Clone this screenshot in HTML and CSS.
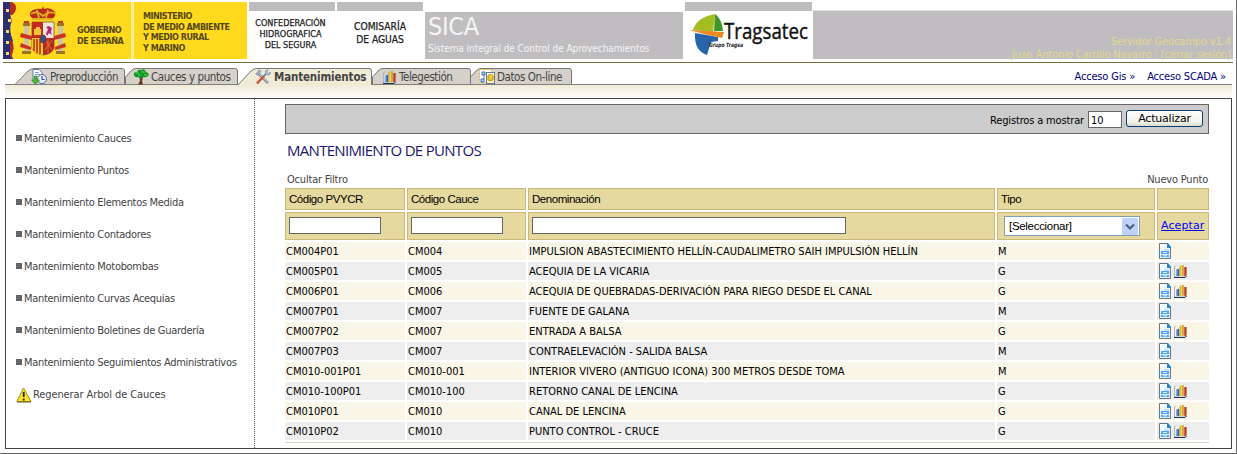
FILE: index.html
```html
<!DOCTYPE html>
<html lang="es">
<head>
<meta charset="utf-8">
<title>SICA - Mantenimiento de puntos</title>
<link rel="stylesheet" href="styles.css">
</head>
<body>
<svg class="defs" width="0" height="0" aria-hidden="true">
  <defs>
    <linearGradient id="page" x2="1" y2="1"><stop offset="0" stop-color="#fff"/><stop offset="1" stop-color="#d5ebfc"/></linearGradient>
    <linearGradient id="gold"><stop offset="0" stop-color="#a98512"/><stop offset=".45" stop-color="#ffe24a"/><stop offset="1" stop-color="#a87b0d"/></linearGradient>
    <linearGradient id="red"><stop offset="0" stop-color="#f28a55"/><stop offset="1" stop-color="#941b08"/></linearGradient>
    <linearGradient id="blue"><stop offset="0" stop-color="#8fc0fa"/><stop offset="1" stop-color="#1c46a8"/></linearGradient>
    <symbol id="doc" viewBox="0 0 13 16">
      <path d="M.5.5H8.500L11.500 4V15.500H.5Z" fill="url(#page)" stroke="#72767f"/>
      <path d="M8 0V5H12V4L9 0Z" fill="#2787cb"/>
      <path d="M5 6H10V8H5Z" fill="#c5e0fa"/>
      <path d="M2 8H10V11H2ZM2 12H10V14H2Z" fill="#4fa4f2"/>
      <path d="M4 9.500H8M4 12.800H8" stroke="#d8efff"/>
    </symbol>
    <symbol id="chart" viewBox="0 0 15 16">
      <path d="M1.500 4.500V14H13.500" fill="none" stroke="#a4b4cc"/>
      <path d="M1 14.500H12L13.500 13" fill="none" stroke="#24364f"/>
      <path d="M1 5 3 2.500" stroke="#9db0c8"/>
      <path d="M3 7 4 6H6V13H3Z" fill="url(#blue)"/>
      <path d="M6.500 4 8 2H10.500V12L9.500 13H6.500Z" fill="url(#gold)"/>
      <path d="M10.500 5 11.500 4H13.500V12.500L12.500 13H10.500Z" fill="url(#red)"/>
    </symbol>
  </defs>
</svg>
<div class="window">
  <header class="banner">
    <div class="gov">
      <svg class="flag" width="63" height="57" viewBox="0 0 63 57">
        <rect width="7" height="57" fill="#2d2f74"/>
        <path d="M7 0h7v57H7z" fill="#353875"/>
        <path d="M7 0Q16 3 14 9H7ZM8 14Q13 18 13 22H8Z" fill="#d2331f"/>
        <path d="M9 0h5v57h-4q-4-9 0-18q-5-13-1-20q-4-9 0-19z" fill="#ffd91b"/>
        <path d="M7 0Q14 1 13 7Q11 14 7 13ZM7 38q5 2 3 12l-3 7z" fill="#b52c24"/>
        <g fill="#f1dc76"><path d="M3 7h3v3H3zM5 17h3v3H5zM3 28h3v3H3zM3 39h3v3H3zM3 50h3v3H3z"/></g>
        <path d="M29 16Q24 11 30 8Q36 6 39 7L40 4L41 7Q47 5 51 9Q55 12 49 17Z" fill="#b92a19"/>
        <path d="M28 12Q34 8 40 14Q47 8 53 12M29 17H50M34 8L36 16M45 8L43 16" fill="none" stroke="#e0ad25" stroke-width="1.800"/>
        <rect x="21" y="23" width="5" height="28" fill="#c9c2ae"/><rect x="55" y="23" width="5" height="28" fill="#c9c2ae"/>
        <path d="M20 21h7v3h-7zM54 21h7v3h-7zM19 49h9v3h-9zM53 49h9v3h-9z" fill="#9b7522"/>
        <path d="M21 19h5v2h-5zM55 19h5v2h-5z" fill="#c8311e"/>
        <path d="M18 31L29 34V38L17 35ZM62 31L51 34V38L63 35ZM18 41L28 45V48L17 45ZM62 41L52 45V48L63 45Z" fill="#c93324"/>
        <path d="M29 20H51V46Q49 52 40 53Q31 52 29 46Z" fill="#efe6dd" stroke="#8b552b" stroke-width=".8"/>
        <path d="M29 20H40V36H29Z" fill="#c52b20"/><path d="M31 27h2v-2h4v2h1v6h-7z" fill="#f1c736"/>
        <path d="M43 32l2-5-2-2 3-1 3 2-1 4 1 3-3-2-2 3z" fill="#b42881"/>
        <path d="M29 36H40V53Q31 52 29 46Z" fill="#f3c82b"/><path d="M31 37v12M34 37v14M37 37v15" stroke="#be2b1c" stroke-width="1.500"/>
        <path d="M40 36H51V46Q49 52 40 53Z" fill="#b62923"/><path d="M42 38l7 10m0-10l-7 10m3-11v14" stroke="#d88b28" stroke-width=".8"/>
        <ellipse cx="40" cy="37" rx="3" ry="4" fill="#24569b" stroke="#a32321"/>
      </svg>
      <p class="gov-name">GOBIERNO<br>DE ESPAÑA</p>
    </div>
    <p class="ministry">MINISTERIO<br>DE MEDIO AMBIENTE<br>Y MEDIO RURAL<br>Y MARINO</p>
    <p class="org org-a">CONFEDERACIÓN<br>HIDROGRAFICA<br>DEL SEGURA</p>
    <p class="org org-b">COMISARÍA<br>DE AGUAS</p>
    <div class="sica"><strong>SICA</strong><span>Sistema integral de Control de Aprovechamientos</span></div>
    <svg class="tragsatec" width="129" height="57" viewBox="0 0 129 57">
      <rect width="129" height="57" fill="#fff"/><rect x="1" width="127" height="9" fill="#bfbdc0"/>
      <path d="M9 28Q13 15 31 12L29 30Z" fill="#a6bd22"/>
      <path d="M31 12Q38 17 39 29L30 29Z" fill="#3f962b"/>
      <path d="M11 31L34 35L34 39L27 40L23 53Q10 49 11 31Z" fill="#2764aa"/>
      <path d="M5 28L40 30L38 36L20 32Z" fill="#ed8922"/>
      <text x="40" y="36.500" class="brand" textLength="84" lengthAdjust="spacingAndGlyphs">Tragsatec</text>
      <text x="25" y="45" class="group" textLength="34" lengthAdjust="spacingAndGlyphs">Grupo Tragsa</text>
    </svg>
    <div class="session"><span class="server">Servidor Geocampo v1.4</span><span class="user">Juan Antonio Carrillo Navarro : [cerrar sesión]</span></div>
  </header>

  <nav class="tabs">
    <a class="tab t1"><svg class="shape" width="110" height="17"><path d="M0 16.500L13 3Q16 .5 19 .5H107Q109.500 .5 109.500 3V16.500" /></svg>
      <svg class="ico" width="16" height="16" viewBox="0 0 16 16"><path d="M2 .5H8L11 3.500V12H2Z" fill="#fff" stroke="#6479b0"/><path d="M4 3.500h4M4 5.500h5" stroke="#7fa0d4"/><circle cx="11" cy="10" r="4.500" fill="#e6edff" stroke="#5264b0"/><path d="M11 7V10.500H13.500" fill="none" stroke="#2a397d"/><path d="M3 7H6V11H8.500L4.500 15.500 .5 11H3Z" fill="#4aba37" stroke="#268c20" stroke-width=".6"/></svg><span>Preproducción</span></a>
    <a class="tab t2"><svg class="shape" width="113" height="17"><path d="M.5 16.500V9L6 3Q8 .5 11 .5H110Q112.500 .5 112.500 3V16.500"/></svg>
      <svg class="ico" width="16" height="16" viewBox="0 0 16 16"><path d="M6.500 8L7 12 5 15.500H10L9 12 10 8Z" fill="#6a3513"/><path d="M1 6Q0 3 4 3Q5 0 8 1Q12-1 13 3Q17 4 15 7Q12 9 10 8L8 10 5 8Q2 9 1 6Z" fill="#18922a"/><path d="M3 4h3M8 3h4M5 6h3M11 6h3" stroke="#36ca40" stroke-width="1.500"/></svg><span>Cauces y puntos</span></a>
    <a class="tab t3 active"><svg class="shape" width="134" height="17"><path d="M0 17L13 3Q16 .5 19 .5H131Q133.500 .5 133.500 3V17"/></svg>
      <svg class="ico" width="16" height="16" viewBox="0 0 16 16"><path d="M3 4L13 14" stroke="#71839b" stroke-width="2.500"/><path d="M3 3.500L13 13.500" stroke="#edf3fb"/><path d="M.8 5L4.500.8L6 2.500L3 6Z" fill="#a9b6cb" stroke="#6d7890" stroke-width=".7"/><path d="M2 14.500L9 7" stroke="#d84c31" stroke-width="2.500"/><path d="M8.500 7.500L12 4" stroke="#7a8eae" stroke-width="2"/><path d="M10.500 4V1.800L13 .8 12 3 13.500 4.500 15.300 3 15 5.500 12 6Z" fill="#becce0" stroke="#7284a0" stroke-width=".7"/></svg><span>Mantenimientos</span></a>
    <a class="tab t4"><svg class="shape" width="99" height="17"><path d="M.5 16.500V9L6 3Q8 .5 11 .5H96Q98.500 .5 98.500 3V16.500"/></svg>
      <svg class="ico" width="15" height="16"><use href="#chart"/></svg><span>Telegestión</span></a>
    <a class="tab t5"><svg class="shape" width="102" height="17"><path d="M.5 16.500V9L6 3Q8 .5 11 .5H99Q101.500 .5 101.500 3V16.500"/></svg>
      <svg class="ico" width="16" height="16" viewBox="0 0 16 16"><rect x=".5" y=".5" width="12" height="13" fill="#fff" stroke="#d6bb34" stroke-dasharray="2 1"/><path d="M3 3H6V6H3ZM2 10H5V13H2ZM5 5V10" fill="#bad6ff" stroke="#3d72bc"/><rect x="7.500" y="3.500" width="8" height="11" fill="#fff8ce" stroke="#667a93"/><ellipse cx="11.500" cy="7" rx="2.500" ry="1.500" fill="#ffe350" stroke="#be9710"/><path d="M9 7V11Q11.500 13 14 11V7" fill="#eec52b" stroke="#be9710"/></svg><span>Datos On-line</span></a>
    <div class="access"><a class="gis">Acceso Gis »</a><a class="scada">Acceso SCADA »</a></div>
  </nav>
  <div class="fade"></div>

  <main class="panel">
    <ul class="side">
      <li><i></i><span>Mantenimiento Cauces</span></li>
      <li><i></i><span>Mantenimiento Puntos</span></li>
      <li><i></i><span>Mantenimiento Elementos Medida</span></li>
      <li><i></i><span>Mantenimiento Contadores</span></li>
      <li><i></i><span>Mantenimiento Motobombas</span></li>
      <li><i></i><span>Mantenimiento Curvas Acequias</span></li>
      <li><i></i><span>Mantenimiento Boletines de Guardería</span></li>
      <li><i></i><span>Mantenimiento Seguimientos Administrativos</span></li>
      <li><svg class="warn" width="16" height="16" viewBox="0 0 16 16"><path d="M7.500 1 15 14.500H.8Z" fill="#ffe51b" stroke="#a58e13" stroke-linejoin="round"/><path d="M1 15H15" stroke="#66602c"/><path d="M7.700 5V10M7.700 11.500V13.500" stroke="#211d08" stroke-width="1.800"/></svg><span>Regenerar Arbol de Cauces</span></li>
    </ul>
    <section class="content">
      <div class="toolbar"><span class="show">Registros a mostrar</span><input class="count" value="10"><button>Actualizar</button></div>
      <h1>MANTENIMIENTO DE PUNTOS</h1>
      <div class="links"><a>Ocultar Filtro</a><a>Nuevo Punto</a></div>
      <table>
        <colgroup><col class="c1"><col class="c2"><col class="c3"><col class="c4"><col class="c5"></colgroup>
        <tr class="head"><th>Código PVYCR</th><th>Código Cauce</th><th>Denominación</th><th>Tipo</th><th></th></tr>
        <tr class="filter"><td><input class="f1"></td><td><input class="f1"></td><td><input class="f3"></td>
          <td><div class="select"><span>[Seleccionar]</span><svg width="16" height="17" viewBox="0 0 16 17"><rect width="16" height="17" rx="1.500" fill="#bfd2fb"/><path d="M4 6.500L8 10.500 12 6.500" fill="none" stroke="#4d6185" stroke-width="2.200"/></svg></div></td>
          <td class="ok"><a>Aceptar</a></td></tr>
        <tr><td>CM004P01</td><td>CM004</td><td>IMPULSION ABASTECIMIENTO HELLÍN-CAUDALIMETRO SAIH IMPULSIÓN HELLÍN</td><td>M</td><td><svg class="doc"><use href="#doc"/></svg></td></tr>
        <tr><td>CM005P01</td><td>CM005</td><td>ACEQUIA DE LA VICARIA</td><td>G</td><td><svg class="doc"><use href="#doc"/></svg><svg class="chart"><use href="#chart"/></svg></td></tr>
        <tr><td>CM006P01</td><td>CM006</td><td>ACEQUIA DE QUEBRADAS-DERIVACIÓN PARA RIEGO DESDE EL CANAL</td><td>G</td><td><svg class="doc"><use href="#doc"/></svg><svg class="chart"><use href="#chart"/></svg></td></tr>
        <tr><td>CM007P01</td><td>CM007</td><td>FUENTE DE GALANA</td><td>M</td><td><svg class="doc"><use href="#doc"/></svg></td></tr>
        <tr><td>CM007P02</td><td>CM007</td><td>ENTRADA A BALSA</td><td>G</td><td><svg class="doc"><use href="#doc"/></svg><svg class="chart"><use href="#chart"/></svg></td></tr>
        <tr><td>CM007P03</td><td>CM007</td><td>CONTRAELEVACIÓN - SALIDA BALSA</td><td>M</td><td><svg class="doc"><use href="#doc"/></svg></td></tr>
        <tr><td>CM010-001P01</td><td>CM010-001</td><td>INTERIOR VIVERO (ANTIGUO ICONA) 300 METROS DESDE TOMA</td><td>M</td><td><svg class="doc"><use href="#doc"/></svg></td></tr>
        <tr><td>CM010-100P01</td><td>CM010-100</td><td>RETORNO CANAL DE LENCINA</td><td>G</td><td><svg class="doc"><use href="#doc"/></svg><svg class="chart"><use href="#chart"/></svg></td></tr>
        <tr><td>CM010P01</td><td>CM010</td><td>CANAL DE LENCINA</td><td>G</td><td><svg class="doc"><use href="#doc"/></svg><svg class="chart"><use href="#chart"/></svg></td></tr>
        <tr><td>CM010P02</td><td>CM010</td><td>PUNTO CONTROL - CRUCE</td><td>G</td><td><svg class="doc"><use href="#doc"/></svg><svg class="chart"><use href="#chart"/></svg></td></tr>
      </table>
      <div class="end"></div>
    </section>
  </main>
</div>
</body>
</html>
```
FILE: styles.css
```css
* { box-sizing: border-box; }
body { margin: 0; background: #fff; color: #000; font: 11px/14px "DejaVu Sans Condensed", "DejaVu Sans", sans-serif; font-stretch: condensed; overflow: hidden; }
p, ul, h1 { margin: 0; padding: 0; }
a { white-space: nowrap; }
.defs { position: absolute; }
.window { width: 1237px; height: 454px; border-right: 1px solid #666; border-bottom: 1px solid #666; padding: 2px 3px 0; }

.banner { display: flex; width: 1230px; height: 61px; border-bottom: 1px solid #766d3a; }
.banner > * { flex: none; height: 57px; }
.gov { display: flex; width: 128px; background: #ffd91b; }
.gov-name { padding: 23px 0 0 11px; line-height: 11px; font-size: 9px; font-weight: bold; letter-spacing: -.5px; white-space: nowrap; color: #554817; }
.ministry { width: 116px; padding: 9px 0 0 9px; border-left: 3px solid #fff1a0; background: #ffd91b; font-size: 9px; font-weight: bold; line-height: 10.700px; letter-spacing: -.5px; white-space: nowrap; color: #554817; }
.org { border-top: 9px solid #bfbdc0; margin-left: 2px; text-align: center; white-space: nowrap; width: 86px; color: #222; -webkit-text-stroke: .25px #222; }
.org-a { padding: 7px 3px 0 0; line-height: 11px; font-size: 9px; }
.org-b { padding-top: 10px; line-height: 12.500px; font-size: 10.200px; }
.sica { display: flex; flex-direction: column; margin: 10px 1px 0 2px; width: 258px; padding-left: 3px; background: #bfbdc0; color: #f5f5f5; }
.banner .sica { height: 47px; }
.sica strong { font-size: 25px; line-height: 29px; font-weight: normal; letter-spacing: -.3px; }
.sica span { font-size: 9.900px; line-height: 15px; white-space: nowrap; }
.brand { font: 21px "Open Sans", sans-serif; fill: #111; stroke: #111; stroke-width: .4px; }
.group { font: italic bold 6px "DejaVu Sans", sans-serif; fill: #222; }
.session { display: flex; flex-direction: column; align-items: flex-end; flex: 1 !important; margin-top: 8px; border-top: 1px solid #ddd; padding: 24px 2px 0 0; background: #bfbdc0; color: #e1d88d; line-height: 13px; letter-spacing: -.12px; white-space: nowrap; }
.banner .session { height: 49px; }

.tabs { display: flex; height: 22px; margin: 0 1px 0 2px; padding: 5px 0 0 10px; border-bottom: 1px solid #808080; width: 1227px; }
.tab { position: relative; display: flex; align-items: center; height: 17px; color: #444; font-size: 11.500px; letter-spacing: -.42px; }
.shape { position: absolute; left: 0; top: 0; z-index: -1; fill: #d5d1c9; stroke: #777; overflow: visible; }
.ico { flex: none; margin-right: 3px; }
.tab span { padding-top: 1px; }
.t1 { width: 110px; padding-left: 16px; }
.t2 { width: 113px; padding-left: 8px; }
.t3 { width: 134px; padding-left: 17px; font-weight: bold; letter-spacing: -.15px; }
.t4 { width: 98px; padding-left: 10px; }
.t5 { width: 102px; padding-left: 9px; }
.t2 .ico, .t5 .ico, .t4 .ico { margin-right: 2px; }
.active .shape { fill: #f0ebd5; z-index: 0; }
.active .ico, .active span { z-index: 1; }
.access { display: flex; gap: 12px; margin-left: auto; padding: 2px 6px 0 0; color: #000080; letter-spacing: -.17px; }
.fade { height: 13px; margin: 0 1px 0 2px; background: linear-gradient(#f0ead5, #fff); }

.panel { display: flex; width: 1227px; height: 351px; margin-left: 2px; border: 1px solid #444; }
.side { width: 249px; padding: 23px 0 0 10px; list-style: none; border-right: 1px dotted #555; color: #444; letter-spacing: -.31px; }
.side li { display: flex; align-items: center; height: 32px; white-space: nowrap; }
.side span { padding-top: 2px; }
.side i { width: 6px; height: 6px; margin-right: 2px; background: #666; }
.side .warn { margin: 2px 1px 0 0; }
.side li:last-child { letter-spacing: -.1px; }
.content { width: 924px; margin-left: 30px; padding-top: 5px; }
.toolbar { display: flex; justify-content: flex-end; align-items: flex-start; height: 30px; padding: 5px 5px 0 0; border: 1px solid #666; background: #ccc; }
.show { padding-top: 4px; letter-spacing: -.15px; }
input { display: block; border: 1px solid #666; background: #fff; font: inherit; border-radius: 0; margin: 0; padding: 1px 2px 0; }
.count { width: 34px; height: 17px; margin: 1px 4px 0 4px; }
button { width: 77px; height: 17px; padding: 0; border: 1px solid #073d79; border-radius: 3px; background: linear-gradient(#fff, #f2f1e8 75%, #dcd8cc); font: 11px "DejaVu Sans", sans-serif; letter-spacing: -.2px; }
h1 { padding: 6px 0 0 2px; height: 38px; font: 15px/20px "Open Sans", sans-serif; letter-spacing: -.7px; color: #1b1773; white-space: nowrap; }
.links { display: flex; justify-content: space-between; height: 14px; padding: 1px 1px 0 2px; color: #444; letter-spacing: -.2px; }
table { width: 928px; margin: 0 -2px; border-spacing: 2px; border-collapse: separate; table-layout: fixed; }
.c1 { width: 120px; } .c2 { width: 119px; } .c3 { width: 467px; } .c4 { width: 158px; } .c5 { width: 52px; }
td { height: 18px; padding: 2px 1px 0; background: #f9f5e7; line-height: 14px; white-space: nowrap; overflow: hidden; }
td:last-child { padding-top: 0; }
tr:nth-child(even) td { background: #eee; }
th, table .filter td { border: 1px solid #cbb777; background: #e6d99f; }
th { height: 22px; padding: 0 3px; text-align: left; font: 11.500px/14px "Liberation Sans", sans-serif; letter-spacing: -.45px; }
.filter td { height: 28px; padding: 0 3px; }
.filter input { height: 17px; margin-top: -2px; }
.f1 { width: 92px; } .f3 { width: 314px; }
.select { display: flex; justify-content: space-between; align-items: center; width: 136px; height: 20px; margin-left: 3px; padding: 0 1px 0 4px; border: 1px solid #7f9db9; background: #fff; font: 11.500px "Liberation Sans", sans-serif; letter-spacing: -.3px; }
.ok a { color: #00f; font: 11px/14px "DejaVu Sans", sans-serif; text-decoration: underline; letter-spacing: .1px; }
.doc { width: 13px; height: 16px; } .chart { width: 15px; height: 16px; margin-left: 1px; }
.doc, .chart { vertical-align: top; }
.doc { margin-left: 1px; }
.end { height: 1px; background: #d8d3c5; }
```
